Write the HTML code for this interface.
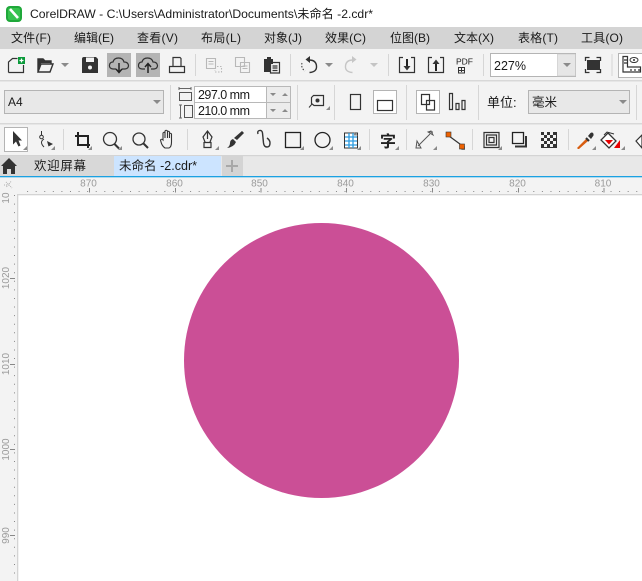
<!DOCTYPE html>
<html><head><meta charset="utf-8"><style>
html,body{margin:0;padding:0;background:#fff;width:642px;height:581px;overflow:hidden}
svg{display:block}
text{font-family:"Liberation Sans","Noto Sans CJK SC",sans-serif;fill:#1a1a1a}
.m{font-size:12px}
.i{fill:none;stroke:#333;stroke-width:1.2}
.g{fill:none;stroke:#b8b8b8;stroke-width:1.1}
.k{fill:#333}
.tri{fill:#8a8a8a}
.sep{stroke:#d6d6d6;stroke-width:1}
.box{fill:#e8e8e8;stroke:#b4b4b4;stroke-width:1}
.r{font-size:10px;fill:#9a9a9a}
</style></head><body>
<svg width="642" height="581" viewBox="0 0 642 581" xmlns="http://www.w3.org/2000/svg">
<rect width="642" height="581" fill="#fff"/>
<!-- title -->
<rect x="6" y="6" width="16" height="16" rx="4" fill="#1fa83a"/>
<rect x="8" y="8" width="12" height="12" rx="2" fill="#37c24e"/>
<path d="M10 9 L18 18" stroke="#fff" stroke-width="2.6"/>
<text x="30" y="18" font-size="12" textLength="343" lengthAdjust="spacingAndGlyphs">CorelDRAW - C:\Users\Administrator\Documents\未命名 -2.cdr*</text>
<!-- menu -->
<rect y="27" width="642" height="22" fill="#d4d4d4"/>
<text class="m" x="11" y="42" textLength="40">文件(F)</text>
<text class="m" x="74" y="42" textLength="40">编辑(E)</text>
<text class="m" x="137" y="42" textLength="41">查看(V)</text>
<text class="m" x="201" y="42" textLength="40">布局(L)</text>
<text class="m" x="264" y="42" textLength="38">对象(J)</text>
<text class="m" x="325" y="42" textLength="41">效果(C)</text>
<text class="m" x="390" y="42" textLength="40">位图(B)</text>
<text class="m" x="454" y="42" textLength="40">文本(X)</text>
<text class="m" x="518" y="42" textLength="40">表格(T)</text>
<text class="m" x="581" y="42" textLength="42">工具(O)</text>
<!-- toolbars bg -->
<rect y="49" width="642" height="106" fill="#f3f3f3"/>
<rect y="80" width="642" height="1.500" fill="#d8d8d8"/>
<rect y="123" width="642" height="1.500" fill="#d8d8d8"/>
<!-- row 1 -->
<path class="i" d="M8.500 72.500V62l4-3.500h5M23.500 65v7.500H8.500"/>
<rect x="18" y="57" width="7" height="7" fill="#0a9a3a"/><path d="M21.500 58.500v4M19.500 60.500h4" stroke="#fff" stroke-width="1.200"/>
<path class="i" d="M38 72V59h5l2 2h6v3M38 72l3-8h12l-3 8z" style="stroke-width:1.400"/>
<path d="M38 59h5l2 2h6v2H41l-3 7z" class="k"/>
<path class="tri" d="M61 63h8l-4 4z"/>
<path class="k" d="M82 59q0-2 2-2h12l2 2v14H82z"/><rect x="86" y="57.500" width="8" height="4.500" fill="#f3f3f3"/><circle cx="90" cy="67.500" r="2" fill="#f3f3f3"/>
<rect x="107" y="53" width="24" height="24" fill="#b4b4b4"/>
<rect x="136" y="53" width="24" height="24" fill="#b4b4b4"/>
<path class="i" d="M116 69h-3q-4-.5-3.500-4 .5-3 3.500-3 1-4 5.500-4t5.500 4q4 0 4.500 3.500 0 3-3.500 3.500h-3"/>
<path d="M119 63v9M116 69l3 3.500 3-3.500" fill="none" stroke="#222" stroke-width="1.500"/>
<path class="i" d="M145 69h-3q-4-.5-3.500-4 .5-3 3.500-3 1-4 5.500-4t5.500 4q4 0 4.500 3.500 0 3-3.500 3.500h-3"/>
<path d="M148 73v-9M145 67l3-3.500 3 3.500" fill="none" stroke="#222" stroke-width="1.500"/>
<path class="i" d="M169.500 72.500v-6h15v6zM173 66.500V57.500h7l1 1v8"/>
<line class="sep" x1="195.500" y1="54" x2="195.500" y2="76"/>
<path class="g" d="M206.500 58.500h9v10h-9zM208.500 61.500h5M208.500 64h5"/><path class="g" stroke-dasharray="1.500 1.500" d="M217 66.500h4.500v5.500H215v-2"/>
<path class="g" d="M235.500 57.500h9v9h-9zM240.500 62.500h9v10h-9zM242.500 66h5M242.500 68.500h5"/>
<path class="k" d="M264 59h3v-2h4v2h2v5h-3v8h-6z"/><path class="i" d="M270.500 62.500h9v10.500h-9zM272.500 66h5M272.500 68h5M272.500 70.500h5"/>
<line class="sep" x1="290.500" y1="54" x2="290.500" y2="76"/>
<path class="i" d="M309 60q7 0 7.500 6t-7 6.500" style="stroke-width:1.400"/><path class="k" d="M310 56v7l-4.500-3.500z"/><path d="M302 63a7 7 0 0 0 3 8" stroke="#333" fill="none" stroke-dasharray="1.500 1.500"/>
<path class="tri" d="M325 63h8l-4 4z"/>
<path d="M353 60q-7 0-7.500 6t7 6.500" fill="none" stroke="#c6c6c6" stroke-width="1.400"/><path fill="#c6c6c6" d="M352 56v7l4.500-3.500z"/>
<path fill="#c4c4c4" d="M370 63h8l-4 4z"/>
<line class="sep" x1="388.500" y1="54" x2="388.500" y2="76"/>
<path class="i" d="M403 57.500h-3.500v15h15v-15H411M432 57.500h-3.500v15h15v-15H440"/>
<path d="M407 59v9" stroke="#222" stroke-width="2"/><path class="k" d="M403.500 66h7L407 70.500z"/>
<path d="M436 71v-9" stroke="#222" stroke-width="2"/><path class="k" d="M432.500 64h7L436 59.500z"/>
<text x="456" y="64.500" font-size="8.500" textLength="17" fill="#333">PDF</text>
<path class="i" d="M458.500 67.500h6v5.500h-6zM461.500 67v5M458.500 70.500h6" style="stroke-width:1"/>
<line class="sep" x1="483.500" y1="54" x2="483.500" y2="76"/>
<rect x="490.500" y="53.500" width="85" height="23" fill="#fff" stroke="#b4b4b4"/>
<rect x="557.500" y="54" width="18" height="22" fill="#e6e6e6" stroke="#c4c4c4" stroke-width=".6"/>
<path class="tri" d="M563 63h8l-4 4z"/>
<text x="494" y="70" font-size="12.500">227%</text>
<rect x="587" y="60" width="13" height="10" class="k"/>
<path class="i" d="M585.500 61v-3.500h4M596.500 57.500h4V61M600.500 69v3.500h-4M589.500 72.500h-4V69" style="stroke-width:1.300"/>
<line class="sep" x1="612" y1="54" x2="612" y2="76"/>
<rect x="618.500" y="53.500" width="26" height="24" fill="#fff" stroke="#b4b4b4"/>
<path class="i" d="M623 56.500v15.500h17.500v-5H627.500V56.500zM627 63h-3M627 60h-3M631 71v-2M635 71v-2M639 71v-2"/>
<ellipse cx="634" cy="60" rx="4" ry="2.500" fill="none" stroke="#333"/><circle cx="634" cy="60" r="1" class="k"/>
<!-- row 2 -->
<rect class="box" x="4.500" y="90.500" width="159" height="23"/>
<text x="8" y="106" font-size="12">A4</text>
<path class="tri" d="M153 100h8l-4 4z"/>
<line class="sep" x1="170.500" y1="85" x2="170.500" y2="120"/>
<path d="M179 88.500h12M179 87v3M191 87v3" stroke="#666" fill="none"/>
<rect x="179.500" y="92.500" width="12" height="8" fill="none" stroke="#555"/>
<path d="M180.500 105v13M179 105h3M179 118h3" stroke="#666" fill="none"/>
<rect x="184.500" y="105.500" width="8" height="12" fill="none" stroke="#555"/>
<rect x="194.500" y="86.500" width="72" height="16" fill="#fff" stroke="#b8b8b8"/>
<rect x="194.500" y="102.500" width="72" height="16" fill="#fff" stroke="#b8b8b8"/>
<rect x="266.500" y="86.500" width="24" height="16" fill="#ececec" stroke="#b8b8b8"/>
<rect x="266.500" y="102.500" width="24" height="16" fill="#ececec" stroke="#b8b8b8"/>
<text x="198" y="99" font-size="12.500" textLength="52">297.0 mm</text>
<text x="198" y="115" font-size="12.500" textLength="52">210.0 mm</text>
<path class="tri" d="M270 93h6l-3 3zM282 96h6l-3-3zM270 109h6l-3 3zM282 112h6l-3-3z"/>
<line class="sep" x1="297.500" y1="85" x2="297.500" y2="120"/>
<path d="M311.500 97.500l2-2h10v10h-9.500l-2.500-2z" fill="none" stroke="#333" stroke-width="1.200"/><path d="M312 104l-3 3.500" stroke="#333"/><circle cx="317.500" cy="100.500" r="2" class="k"/>
<path class="tri" d="M330 110v-4l-4 4z"/>
<line class="sep" x1="334.500" y1="85" x2="334.500" y2="120"/>
<rect x="350.500" y="94.500" width="10" height="15" fill="none" stroke="#333" stroke-width="1.200"/>
<rect x="373.500" y="90.500" width="23" height="23" fill="#fff" stroke="#b4b4b4"/>
<rect x="377.500" y="100.500" width="15" height="10" fill="none" stroke="#333" stroke-width="1.200"/>
<line class="sep" x1="406.500" y1="85" x2="406.500" y2="120"/>
<rect x="416.500" y="90.500" width="23" height="23" fill="#fff" stroke="#b4b4b4"/>
<path class="i" d="M421.500 94.500h8v10h-8zM426.500 100.500h8v9.500h-8z" style="stroke-width:1.200"/>
<path class="i" d="M449.500 93.500h3v16h-3zM456 103.500h3v6h-3zM462 100.500h3v9h-3z" style="stroke-width:1.200"/>
<line class="sep" x1="478.500" y1="85" x2="478.500" y2="120"/>
<text x="487" y="107" font-size="13">单位:</text>
<rect class="box" x="528.500" y="90.500" width="101" height="23"/>
<text x="532" y="106.500" font-size="12.500">毫米</text>
<path class="tri" d="M619 100h8l-4 4z"/>
<line class="sep" x1="636.500" y1="85" x2="636.500" y2="120"/>
<!-- row 3 -->
<rect x="4.500" y="127.500" width="23" height="24" fill="#fff" stroke="#b4b4b4"/>
<path class="k" d="M13 131l9 9.500h-3.500l2 5-2 1-2.500-5-3 3z"/>
<path class="tri" d="M27 150v-4l-4 4zM55 150v-4l-4 4zM92 150v-4l-4 4zM122 150v-4l-4 4zM219 150v-4l-4 4zM304 150v-4l-4 4zM333 150v-4l-4 4zM361 150v-4l-4 4zM399 150v-4l-4 4zM437 150v-4l-4 4zM465 150v-4l-4 4zM502 150v-4l-4 4zM596 150v-4l-4 4zM625 150v-4l-4 4z"/>
<path fill="none" stroke="#333" d="M41.500 131v4M44 139q-5 3 0 8"/><circle cx="41.500" cy="137" r="1.800" fill="none" stroke="#333"/><path class="k" d="M47 141l6 3-4.500 2.500z"/>
<line class="sep" x1="63.500" y1="129" x2="63.500" y2="150"/>
<path d="M78 132v13h12M75 136h13v12" fill="none" stroke="#222" stroke-width="2"/>
<circle cx="110" cy="139" r="6.500" fill="none" stroke="#333" stroke-width="1.300"/><path d="M114.500 144l4.500 4.500" stroke="#333" stroke-width="2"/>
<circle cx="139" cy="139" r="6" fill="none" stroke="#333" stroke-width="1.300"/><path d="M143.500 143.500l4.500 4.500" stroke="#333" stroke-width="2"/>
<path fill="none" stroke="#333" stroke-width="1.100" d="M165 148q-3-2-4-6l-.5-2q1-1.500 2.500 0v-7q1-1.500 2 0v5-7q1-1.500 2.500 0v7-6q1-1.500 2 0v6-4q1-1.500 2 0v8q0 5-2.500 6z"/>
<line class="sep" x1="187.500" y1="129" x2="187.500" y2="150"/>
<path fill="none" stroke="#333" stroke-width="1.200" d="M205 142l-2-5 4.500-6 4.500 6-2 5M207.500 132v7M204 142.500h7v5h-7z"/>
<path class="k" d="M242 131l2 2-7 7-3-2zM233 139l3 3q-2 5-9 6 3-2 3-5 0-3 3-4z"/>
<path fill="none" stroke="#333" stroke-width="1.400" d="M258 134q-1-3 1.500-3.500t3 2.500l1 10q.5 4 3.500 4t3-4q0-3-3-5"/>
<rect x="285.500" y="132.500" width="15" height="15" fill="none" stroke="#222" stroke-width="1.300"/>
<circle cx="322.500" cy="140" r="7.500" fill="none" stroke="#222" stroke-width="1.300"/>
<rect x="344.500" y="133" width="13" height="15" fill="#fff" stroke="#333"/>
<path d="M345 137h12M345 141h12M345 145h12M349 133v15M353 133v15" stroke="#2b9be0" stroke-width="1.300"/>
<path d="M354 132l4 3.500h-4z" fill="#888"/>
<line class="sep" x1="369.500" y1="129" x2="369.500" y2="150"/>
<text x="380" y="147" font-size="16" font-weight="700" style="fill:#222">字</text>
<line class="sep" x1="406.500" y1="129" x2="406.500" y2="150"/>
<path d="M418 146l12-12" stroke="#555"/><path d="M417 141l4 7h-5zM428 132l5 3-2-4z" fill="none" stroke="#555"/><path d="M416 148h5M429 132h4" stroke="#555"/>
<path d="M449 136l15 11" stroke="#333" stroke-width="1.200"/>
<rect x="446" y="132" width="5" height="5" fill="#ee6100" stroke="#333" stroke-width=".6"/>
<rect x="459.500" y="144" width="5" height="5" fill="#ee6100" stroke="#333" stroke-width=".6"/>
<line class="sep" x1="472.500" y1="129" x2="472.500" y2="150"/>
<path fill="none" stroke="#333" stroke-width="1.200" d="M484 132.500h15v15h-15zM486.500 135h10v10h-10zM489 137.500h5v5h-5z"/>
<path fill="none" stroke="#222" stroke-width="1.300" d="M512.500 132.500h11v11h-11z"/><path fill="none" stroke="#333" stroke-width="2" d="M526 136v10.500h-11"/>
<rect x="541" y="132" width="16" height="16" fill="#333"/>
<path d="M544 132h3v3h-3zM550 132h3v3h-3zM541 135h3v3h-3zM547 135h3v3h-3zM553 135h3v3h-3zM544 138h3v3h-3zM550 138h3v3h-3zM541 141h3v3h-3zM547 141h3v3h-3zM553 141h3v3h-3zM544 144h3v3h-3zM550 144h3v3h-3z" fill="#f3f3f3"/>
<line class="sep" x1="568.500" y1="129" x2="568.500" y2="150"/>
<path d="M578 149l-1-1 9-9 2 2-9 8z" fill="#d85d10"/><path d="M586 138l3 3" stroke="#333" stroke-width="2"/><path class="k" d="M588 136l2.500-3q1.500-1 2.500 0t.5 2.500L591 139z"/>
<path d="M608 133l8 8-7 7-8-8z" fill="#fff" stroke="#333" stroke-width="1.300"/><path d="M604 135l3-3 7 2" fill="none" stroke="#333"/><path d="M605 140h8l-4 4.500z" fill="#e80000"/><path d="M620 140v8h-6z" fill="#e80000"/>
<path d="M636 141l6-6v13z" fill="#fff" stroke="#333" stroke-width="1.200"/>
<!-- tabs -->
<rect y="155" width="642" height="22" fill="#e8e8e8"/>
<rect y="155" width="642" height="1.200" fill="#d4d4d4"/>
<rect y="156" width="114" height="20" fill="#d8d8d8"/>
<path class="k" d="M9 158l8 8h-2v8h-4v-5H7v5H3v-8H1z"/>
<text x="34" y="170" font-size="12.500" textLength="52">欢迎屏幕</text>
<rect x="114" y="156" width="107" height="20" fill="#cce4ff"/>
<text x="119" y="170" font-size="12.500" textLength="78">未命名 -2.cdr*</text>
<rect x="222" y="156" width="21" height="20" fill="#d4d4d4"/>
<path d="M232 160v12M226 166h12" stroke="#a8a8a8" stroke-width="2"/>
<rect y="176" width="642" height="1.400" fill="#1ba1e2"/>
<!-- rulers -->
<rect y="177.400" width="642" height="17" fill="#f3f3f3"/>
<rect y="194" width="18" height="387" fill="#f3f3f3"/>
<rect x="18" y="194" width="624" height="1.300" fill="#d4d4d4"/>
<rect x="17" y="194" width="1.300" height="387" fill="#d4d4d4"/>
<path d="M6 182l6 6M11 181.500l-5 6M4 185h3" stroke="#b0b0b0" stroke-dasharray="1 1" fill="none"/>
<g text-anchor="middle">
<text class="r" x="88.500" y="186.500">870</text><text class="r" x="174.500" y="186.500">860</text><text class="r" x="259.500" y="186.500">850</text><text class="r" x="345.500" y="186.500">840</text><text class="r" x="431.500" y="186.500">830</text><text class="r" x="517.500" y="186.500">820</text><text class="r" x="603" y="186.500">810</text>
</g>
<path d="M89.500 188v4.500M175.500 188v4.500M261 188v4.500M346.500 188v4.500M432.500 188v4.500M518.500 188v4.500M604 188v4.500" stroke="#888"/>
<line x1="20" y1="191.500" x2="642" y2="191.500" stroke="#888" stroke-dasharray="1 7.580" stroke-dashoffset="1.500"/>
<line x1="14.500" y1="195" x2="14.500" y2="581" stroke="#888" stroke-dasharray="1 7.580"/>
<path d="M10 278.500h5M10 364.500h5M10 449.500h5M10 535.500h5" stroke="#888"/>
<g text-anchor="middle">
<text class="r" transform="translate(9 278) rotate(-90)">1020</text>
<text class="r" transform="translate(9 364) rotate(-90)">1010</text>
<text class="r" transform="translate(9 449.500) rotate(-90)">1000</text>
<text class="r" transform="translate(9 535.500) rotate(-90)">990</text>
<text class="r" transform="translate(9 198) rotate(-90)">10</text>
</g>
<!-- canvas -->
<circle cx="321.500" cy="360.500" r="137.500" fill="#cb4f96"/>
</svg>
</body></html>
